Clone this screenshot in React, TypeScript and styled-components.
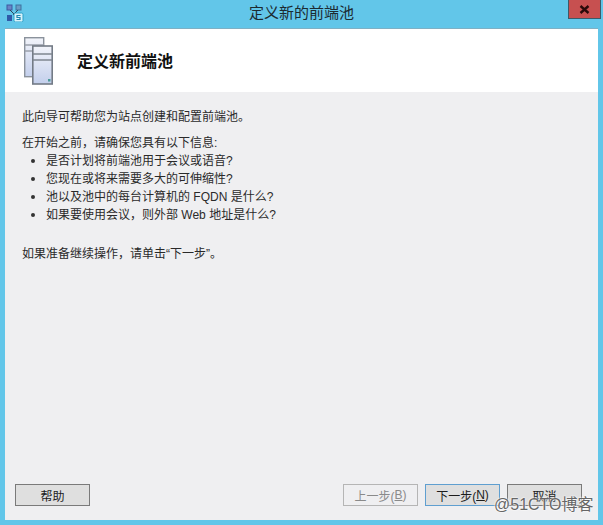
import React from 'react'
import styled, { createGlobalStyle } from 'styled-components'

const GlobalStyle = createGlobalStyle`
  html, body {
    margin: 0;
    padding: 0;
    background: #62c6e9;
  }
  body {
    font-family: "Liberation Sans", "Noto Sans CJK SC", sans-serif;
  }
`

const Frame = styled.div`
  position: relative;
  width: 603px;
  height: 525px;
  background: #62c6e9;
  display: flex;
  flex-direction: column;
  overflow: hidden;
`
const TitleBar = styled.div`
  position: relative;
  height: 28px;
  flex: none;
  display: flex;
  align-items: center;
  justify-content: center;
  font-size: 15px;
  color: #1c2a30;
  padding-bottom: 6px;
  box-sizing: border-box;
`
const AppIcon = styled.svg`
  position: absolute;
  left: 6px;
  top: 4px;
`
const CloseButton = styled.div`
  position: absolute;
  right: 2px;
  top: 0;
  width: 33px;
  height: 19px;
  box-sizing: border-box;
  background: #c75050;
  border: 1px solid #3c5a68;
  border-top: none;
  display: flex;
  align-items: center;
  justify-content: center;
`
const Client = styled.div`
  flex: 1;
  margin: 0 5px 5px 5px;
  display: flex;
  flex-direction: column;
  background: #efeff1;
  border-top: 1px solid #7fb0c4;
`
const Header = styled.div`
  height: 63px;
  flex: none;
  background: #fff;
  display: flex;
  align-items: center;
  padding-left: 19px;
`
const HeaderTitle = styled.div`
  margin: 0 0 2px 24px;
  font-size: 16px;
  font-weight: 700;
  color: #111;
`
const Body = styled.div`
  flex: 1;
  padding: 16px 0 0 17px;
  font-size: 12px;
  line-height: 18px;
  color: #2a2a2a;
`
const Para = styled.div<{ $gap?: number }>`
  margin-top: ${p => p.$gap ?? 0}px;
`
const Bullets = styled.ul`
  list-style: none;
  margin: 0;
  padding: 0;
`
const Bullet = styled.li`
  display: flex;
  &::before {
    content: '';
    width: 4px;
    height: 4px;
    border-radius: 50%;
    background: #333;
    margin: 7px 11px 0 9px;
  }
`
const Footer = styled.div`
  flex: none;
  display: flex;
  padding: 0 16px 14px 10px;
`
const Button = styled.div<{ $kind?: 'disabled' | 'primary' }>`
  width: 75px;
  height: 22px;
  box-sizing: border-box;
  display: flex;
  align-items: center;
  justify-content: center;
  font-size: 12px;
  margin-left: 7px;
  background: ${p => (p.$kind === 'disabled' ? '#efeff1' : '#dfdfdf')};
  color: ${p => (p.$kind === 'disabled' ? '#8a8a8a' : '#1c1c1c')};
  border: 1px solid
    ${p => (p.$kind === 'disabled' ? '#b5b5b5' : p.$kind === 'primary' ? '#5f9fd0' : '#7a7a7a')};
  u {
    text-underline-offset: 1px;
  }
`
const HelpButton = styled(Button)`
  margin-left: 0;
  margin-right: auto;
`
const Watermark = styled.div`
  position: absolute;
  left: 494px;
  top: 495px;
  font-size: 16px;
  line-height: 20px;
  color: #666;
  text-shadow: 0 0 2px #fff, 0 0 2px #fff;
  white-space: nowrap;
`

function ServerIcon() {
  return (
    <svg width="29" height="48" viewBox="0 0 29 48">
      <defs>
        <linearGradient id="srv" x1="0" y1="0" x2="0" y2="1">
          <stop offset="0" stopColor="#f2f4fa" />
          <stop offset="1" stopColor="#c3cfec" />
        </linearGradient>
      </defs>
      <rect x="0.7" y="0.7" width="19" height="39" fill="url(#srv)" stroke="#8b929c" strokeWidth="1.4" />
      <path d="M1 8h19M1 14h19" stroke="#9aa0aa" strokeWidth="1.4" />
      <rect x="8.8" y="9" width="19.4" height="38" fill="url(#srv)" stroke="#737b86" strokeWidth="1.6" />
      <path d="M9 17h19M9 23h19" stroke="#7f8690" strokeWidth="1.6" />
      <rect x="24" y="42" width="2.5" height="2.5" fill="#4d9a9a" />
    </svg>
  )
}

export default function App() {
  return (
    <Frame>
      <GlobalStyle />
      <TitleBar>
        <AppIcon width="18" height="18" viewBox="0 0 18 18">
          <rect x="1" y="1" width="5" height="5" fill="#6a84c4" stroke="#3d5aa0" />
          <rect x="10" y="1" width="5" height="5" fill="#6a9cc4" stroke="#3d72a0" />
          <path d="M4 6l5 5M12 6l-5 5" stroke="#345" strokeWidth="1" />
          <rect x="1" y="11" width="5" height="6" fill="#2f5aa8" />
          <rect x="8" y="9" width="9" height="9" rx="1.5" fill="#d8f2fa" stroke="#2ba0c8" />
          <path d="M14.5 11.5h-3.5v2h3v2h-3.5" fill="none" stroke="#1f86b0" strokeWidth="1.2" />
        </AppIcon>
        定义新的前端池
        <CloseButton>
          <svg width="11" height="9" viewBox="0 0 11 9">
            <path d="M1.5 1l8 7M9.5 1l-8 7" stroke="#2a0a0a" strokeWidth="2.4" />
          </svg>
        </CloseButton>
      </TitleBar>
      <Client>
        <Header>
          <ServerIcon />
          <HeaderTitle>定义新前端池</HeaderTitle>
        </Header>
        <Body>
          <Para>此向导可帮助您为站点创建和配置前端池。</Para>
          <Para $gap={8}>在开始之前，请确保您具有以下信息:</Para>
          <Bullets>
            <Bullet>是否计划将前端池用于会议或语音?</Bullet>
            <Bullet>您现在或将来需要多大的可伸缩性?</Bullet>
            <Bullet>池以及池中的每台计算机的 FQDN 是什么?</Bullet>
            <Bullet>如果要使用会议，则外部 Web 地址是什么?</Bullet>
          </Bullets>
          <Para $gap={21}>如果准备继续操作，请单击“下一步”。</Para>
        </Body>
        <Footer>
          <HelpButton>帮助</HelpButton>
          <Button $kind="disabled">上一步(<u>B</u>)</Button>
          <Button $kind="primary">下一步(<u>N</u>)</Button>
          <Button>取消</Button>
        </Footer>
      </Client>
      <Watermark>@51CTO博客</Watermark>
    </Frame>
  )
}
